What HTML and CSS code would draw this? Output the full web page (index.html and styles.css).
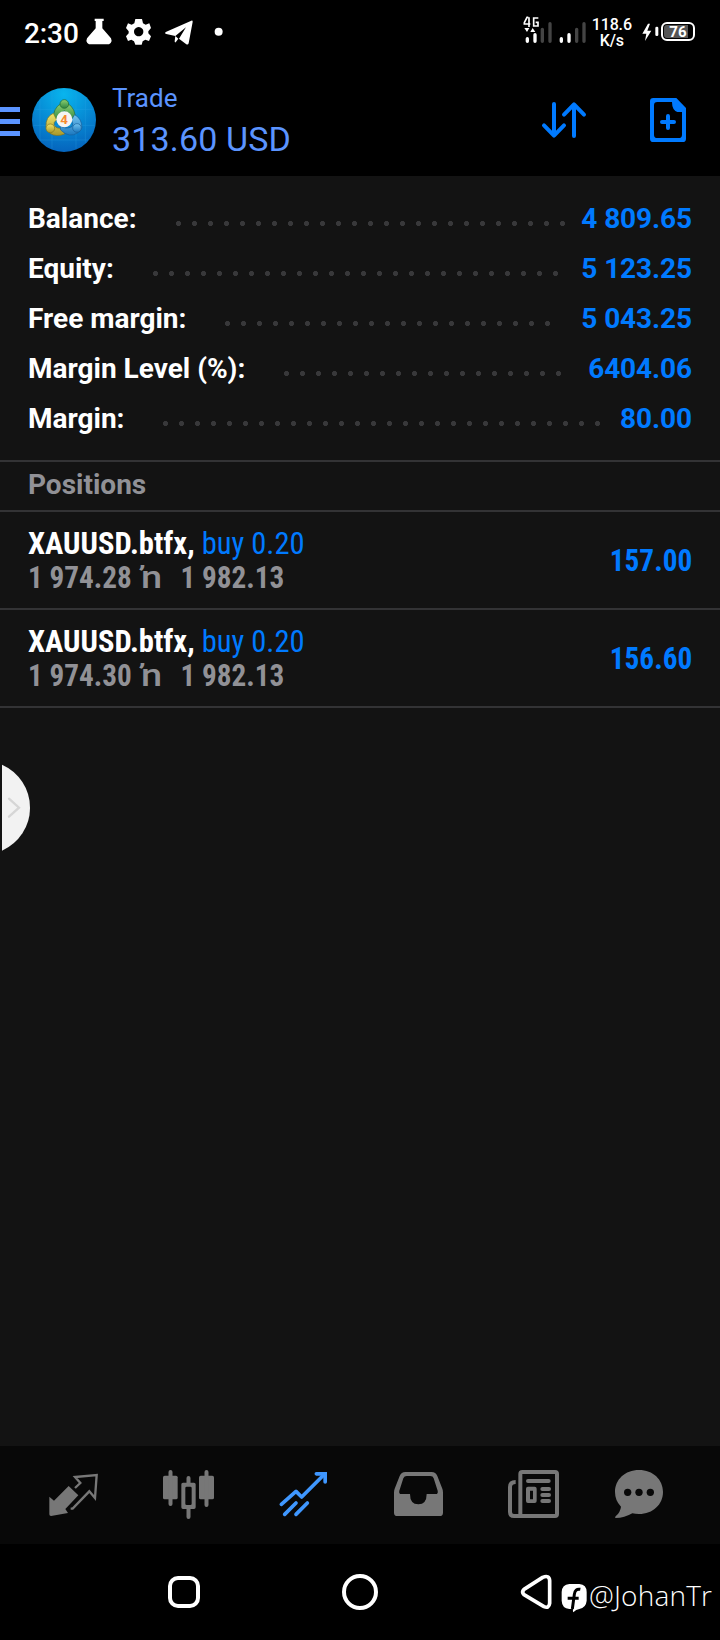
FILE: index.html
```html
<!DOCTYPE html>
<html lang="en">
<head>
    <meta charset="UTF-8">
    <meta name="viewport" content="width=device-width, initial-scale=1.0">
    <title>Trade</title>
    <link rel="stylesheet" href="styles.css">
</head>
<body>
    <div class="statusbar">
        <span class="clock">2:30</span>
        <svg class="status-left" viewBox="250 40 440 110" fill="#fff">
            <path d="M285 57h27v7h-4v22l26 30q4 8-1 14l-5 4h-60l-5-4q-5-6-1-14l26-30V64h-3z"/>
            <path fill-rule="evenodd" d="M407 58h20l3 13 8 4 11-4 5 14-8 10v6l8 9-6 14-11-4-8 5-3 10h-19l-4-10-8-5-10 4-6-14 8-9v-6l-8-10 6-14 11 4 8-4zM417 82a14 14 0 1 0 .1 0z"/>
            <path d="M575 63q5-1 4 4l-12 64q-2 6-8 2l-21-16 21-34-32 26-27-6q-8-3 0-7z"/>
            <path d="M527 109l9 8-8 11q-3 1-3-3z"/>
            <circle cx="657" cy="96" r="12"/>
        </svg>
        <svg class="signal" viewBox="70 45 195 90">
            <g fill="none" stroke="#fff" stroke-width="5">
                <path d="M86 52h-4L74 68v4h18M88 52v29M116 54h-14v24h13V67h-7"/>
            </g>
            <path fill="#fff" d="M74 84h15l-7 12zM92 96l7-12 8 12z"/>
            <g stroke="#fff" stroke-width="10" stroke-linecap="round">
                <path d="M83 116v8M106 104v20M185 116v8M208 104v20"/>
            </g>
            <g stroke="#444" stroke-width="10" stroke-linecap="round">
                <path d="M128 88v36M151 71v53M231 88v36M253 71v53"/>
            </g>
        </svg>
        <div class="speed">118.6<br>K/s</div>
        <svg class="bolt" viewBox="428 70 50 55" fill="#fff">
            <path d="M446 72l-17 30h12l-4 22 19-31h-12l8-21z"/>
            <rect x="468" y="81" width="9" height="28" rx="4"/>
        </svg>
        <div class="battery"><span>76</span></div>
    </div>

    <div class="header">
        <div class="menu"><i></i><i></i><i></i></div>
        <svg class="logo" viewBox="0 0 192 192">
            <defs>
                <radialGradient id="sky" cx=".5" cy=".1" r=".9">
                    <stop offset="0" stop-color="#08b5ee"/>
                    <stop offset="1" stop-color="#0564bd"/>
                </radialGradient>
                <linearGradient id="green" x2="0" y2="1"><stop stop-color="#8fd071"/><stop offset="1" stop-color="#2c8540"/></linearGradient>
                <linearGradient id="yellow" x2="0" y2="1"><stop stop-color="#f1e56b"/><stop offset="1" stop-color="#a8982a"/></linearGradient>
                <linearGradient id="blue" x2="0" y2="1"><stop stop-color="#75c5f0"/><stop offset="1" stop-color="#1b78bf"/></linearGradient>
            </defs>
            <circle cx="96" cy="96" r="96" fill="url(#sky)"/>
            <path stroke="#2fa7e8" stroke-width="2" opacity=".4" d="M24 32v128M60 10v172M132 10v172M160 28v136M10 64h172M4 112h184M24 156h144"/>
            <path d="M64 96q-2-36 24-50h18q26 14 24 52l-18 2q-2-24-16-32-12 8-14 26z" fill="url(#green)" stroke="#256b38" stroke-width="2"/>
            <path d="M64 76q-24 10-22 42l12 18q18 12 44 2l-6-18q-18 4-26-8-2-10 8-16z" fill="url(#yellow)" stroke="#80741f" stroke-width="2"/>
            <path d="M128 80q22 12 22 40l-12 14q-26 18-52-8l-2-14q16 14 36 4 6-8-2-20z" fill="url(#blue)" stroke="#165f9b" stroke-width="2"/>
            <circle cx="97" cy="48" r="13" fill="url(#green)" stroke="#1d6530" stroke-width="2"/>
            <circle cx="55" cy="121" r="13" fill="url(#yellow)" stroke="#80741f" stroke-width="2"/>
            <circle cx="135" cy="120" r="13" fill="url(#blue)" stroke="#165f9b" stroke-width="2"/>
            <circle cx="97" cy="94" r="24" fill="#f4f4f2"/>
            <text class="logo-digit" x="96" y="109" text-anchor="middle">4</text>
        </svg>
        <div class="title">
            <div class="title-name">Trade</div>
            <div class="title-sum">313.60 USD</div>
        </div>
        <svg class="sort" viewBox="120 300 144 120" fill="none" stroke="#007aff" stroke-width="12" stroke-linecap="round" stroke-linejoin="round">
            <path d="M162 312v94M132 376l30 31 30-31M222 408v-94M192 344l30-31 30 31"/>
        </svg>
        <svg class="new-order" viewBox="447 291 114 138">
            <path fill="#007aff" fill-rule="evenodd" d="M460 294h69l29 30v92q0 10-10 10h-88q-10 0-10-10V304q0-10 10-10zM472 306q-10 0-10 10v88q0 10 10 10h64q10 0 10-10v-68h-14q-16-6-16-30z"/>
            <path stroke="#007aff" stroke-width="12" stroke-linecap="round" d="M504 348v36M486 366h36"/>
        </svg>
    </div>

    <div class="summary">
        <div class="row"><span class="label">Balance:</span><span class="dots" style="--n: 25"></span><span class="value">4 809.65</span></div>
        <div class="row"><span class="label">Equity:</span><span class="dots" style="--n: 26"></span><span class="value">5 123.25</span></div>
        <div class="row"><span class="label">Free margin:</span><span class="dots" style="--n: 21"></span><span class="value">5 043.25</span></div>
        <div class="row"><span class="label">Margin Level (%):</span><span class="dots" style="--n: 18"></span><span class="value">6404.06</span></div>
        <div class="row"><span class="label">Margin:</span><span class="dots" style="--n: 28"></span><span class="value">80.00</span></div>
    </div>

    <div class="section">Positions</div>

    <div class="position">
        <div class="info">
            <div class="symbol">XAUUSD.btfx, <span class="side">buy 0.20</span></div>
            <div class="prices">1 974.28 <span class="arrow">ŉ</span>&nbsp; 1 982.13</div>
        </div>
        <div class="profit">157.00</div>
    </div>
    <div class="position">
        <div class="info">
            <div class="symbol">XAUUSD.btfx, <span class="side">buy 0.20</span></div>
            <div class="prices">1 974.30 <span class="arrow">ŉ</span>&nbsp; 1 982.13</div>
        </div>
        <div class="profit">156.60</div>
    </div>

    <!-- edge panel handle, floats over the list -->
    <svg class="handle" viewBox="0 70 96 270">
        <path fill="#f2f2f2" d="M6 75a141 141 0 0 1 0 258z"/>
        <path fill="none" stroke="#d6d6d6" stroke-width="7" stroke-linecap="round" d="M27 177l30 27-30 27"/>
    </svg>

    <div class="tabs">
        <svg viewBox="132 75 180 180">
            <path fill="#777" d="M206 138l29 28-39 41 8 12-51 9q-5 0-5-5v-53l14 12z"/>
            <path fill="none" stroke="#777" stroke-width="7" d="M212 206h6l50-52 17 20 5-69-65 6 16 18-16 15"/>
        </svg>
        <svg viewBox="477 75 180 180">
            <g fill="#777">
                <rect x="489" y="107" width="44" height="71" rx="5"/>
                <rect x="597" y="107" width="45" height="71" rx="5"/>
                <path fill-rule="evenodd" d="M549 128h33q5 0 5 5v69q0 5-5 5h-33q-5 0-5-5v-69q0-5 5-5zM560 140q-4 0-4 4v47q0 4 4 4h11q4 0 4-4v-47q0-4-4-4z"/>
            </g>
            <path stroke="#777" stroke-width="12" stroke-linecap="round" d="M511.500 96v96M619.500 96v99M565.500 114v16M565.500 206v25"/>
        </svg>
        <svg viewBox="102 75 180 180" fill="none" stroke="#3f97ff" stroke-width="11" stroke-linecap="round" stroke-linejoin="round">
            <path d="M124 193l44-39 17 17 66-66M134 223l34-34M168 223l34-34"/>
            <path stroke-linejoin="miter" d="M229 101.500h26.500V126"/>
        </svg>
        <svg viewBox="447 75 180 180">
            <path fill="#777" fill-rule="evenodd" d="M496 96h79q12 0 17 12l15 38q2 5 2 12v60q0 10-10 10h-127q-10 0-10-10v-60q0-7 2-12l15-38q5-12 17-12zM500 108q-7 0-10 7l-12 37q-2 10 6 10h26q0 31 25 31t25-31h27q8 0 6-10l-12-37q-2-7-10-7z"/>
        </svg>
        <svg viewBox="72 75 180 180">
            <g fill="none" stroke="#777" stroke-width="12">
                <rect x="121" y="96" width="110" height="132" rx="6"/>
                <path d="M107 126q-17 0-17 15v75q0 12 12 12h24"/>
            </g>
            <path fill="#777" fill-rule="evenodd" d="M144 140h20q6 0 6 6v37q0 6-6 6h-20q-6 0-6-6v-37q0-6 6-6zM150 152v26h9v-26z"/>
            <path stroke="#777" stroke-width="12" stroke-linecap="round" d="M144 123h62M187 147h20M187 165h20M187 183h20"/>
        </svg>
        <svg class="chat" viewBox="387 75 180 180">
            <path fill="#777" d="M477 90c42 0 72 29 72 66s-30 66-72 66q-11 0-20-2-24 14-50 14-4-2 0-5 14-12 16-29-18-18-18-44c0-37 30-66 72-66z"/>
            <g fill="#080808"><circle cx="443" cy="157" r="11"/><circle cx="477" cy="157" r="11"/><circle cx="511" cy="157" r="11"/></g>
        </svg>
    </div>

    <div class="navbar">
        <div class="recent"></div>
        <div class="home"></div>
        <svg class="back" viewBox="120 72 96 108" fill="none" stroke="#fff" stroke-width="11" stroke-linejoin="round">
            <path d="M188 82q20-8 21 10v68q-2 16-17 10l-60-36q-8-8 0-16z"/>
        </svg>
        <svg class="fb" viewBox="243 99 78 90">
            <path fill="#fff" d="M268 102h30q22 2 22 24v26q-2 21-22 25-10 1-18 10-2-3-1-10h-11q-22-2-23-25v-26q1-22 23-24z"/>
            <path fill="none" stroke="#000" stroke-width="9" d="M301 118q-16-3-18 15l-6 44M263 145h33"/>
        </svg>
        <span class="handle-name">@JohanTr</span>
    </div>
</body>
</html>
```
FILE: styles.css
```css
* { margin: 0; padding: 0; box-sizing: border-box; }
:root {
    --blue: #007aff; --light-blue: #5b94ff;
    --bg: #131313; --line: #333335;
    --gray: #919196;
}
body { width: 720px; height: 1640px; display: flex; flex-direction: column; background: var(--bg); color: #fff; font-family: Roboto, "Liberation Sans", sans-serif; overflow: hidden; position: relative; }
svg { display: block; flex: none; }

.statusbar { height: 64px; display: flex; align-items: flex-start; background: #000; flex: none; }
.clock { width: 59px; margin-left: 24px; padding-top: 16px; font-size: 28px; line-height: 36px; font-weight: 500; letter-spacing: -0.1px; white-space: nowrap; }
.status-left { width: 146.67px; height: 36.67px; margin-top: 13.33px; }
.signal { width: 65px; height: 30px; margin: 15px 0 0 293.67px; }
.speed { width: 44px; margin: 17px 0 0 1.500px; font-size: 16px; line-height: 16px; font-weight: 500; text-align: center; letter-spacing: -0.1px; }
.bolt { width: 16.67px; height: 18.33px; margin: 23.33px 0 0 8.500px; }
.battery { width: 34px; height: 19px; margin: 22px 0 0 2px; border: 2px solid #fff; border-radius: 6px; padding: 1px; }
.battery span { display: block; height: 13px; border-radius: 3px; background: linear-gradient(90deg, #555 85%, #000 85%); font-size: 15px; line-height: 14px; font-weight: 700; text-align: center; }

.header { height: 112px; display: flex; align-items: flex-start; background: #000; flex: none; }
.menu { width: 20px; display: flex; flex-direction: column; gap: 7px; margin-top: 43px; }
.menu i { height: 5px; background: var(--light-blue); }
.logo { width: 64px; height: 64px; margin: 24px 0 0 12px; }
.logo-digit { font: 700 40px Roboto, sans-serif; fill: #f58a2e; }
.title { width: 430px; margin: 18px 0 0 16px; color: var(--light-blue); white-space: nowrap; }
.title-name { font-size: 26px; line-height: 32px; }
.title-sum { font-size: 34px; line-height: 50px; letter-spacing: 0.15px; }
.sort { width: 48px; height: 40px; margin: 36px 0 0 -2px; }
.new-order { width: 38px; height: 46px; margin: 33px 0 0 61px; }

.summary { height: 284px; padding: 17px 28px 0; flex: none; }
.row { display: flex; height: 50px; align-items: center; font-size: 28px; font-weight: 700; white-space: nowrap; }
.dots { width: calc(var(--n) * 16px); height: 5px; margin: 11px 0 0 39px; background: radial-gradient(circle at 2.500px 2.500px, #38383a 2.200px, transparent 2.900px) 0 0 / 16px 5px repeat-x; }
.value { margin-left: auto; color: var(--blue); letter-spacing: -0.1px; }

.section { height: 52px; padding: 0 28px; border-top: 2px solid var(--line); border-bottom: 2px solid var(--line); color: var(--gray); font-size: 28px; line-height: 46px; font-weight: 700; flex: none; }

.position { height: 98px; display: flex; justify-content: space-between; align-items: center; padding: 0 28px 1px; border-bottom: 2px solid var(--line); font-size: 32px; line-height: 34px; font-weight: 700; font-stretch: 75%; white-space: nowrap; flex: none; }
.symbol { transform: scaleX(0.955); transform-origin: left; }
.side { color: var(--blue); font-weight: 400; }
.prices { color: var(--gray); transform: scaleX(0.912); transform-origin: left; }
.arrow { display: inline-block; margin: 0 11px 0 2.500px; font-weight: 500; font-stretch: 100%; transform: scaleX(1.3); transform-origin: left; }
.profit { color: var(--blue); transform: scaleX(0.913); transform-origin: right; }

.handle { position: absolute; left: 0; top: 763.33px; width: 32px; height: 90px; }

.tabs { height: 98px; margin-top: auto; padding: 19px 0 0 44px; display: flex; gap: 55px; background: #080808; flex: none; }
.tabs svg { width: 60px; height: 60px; }
.tabs .chat { margin-left: -10px; }

.navbar { height: 96px; display: flex; align-items: flex-start; background: #000; flex: none; }
.recent { width: 32px; height: 32px; margin: 32px 0 0 168px; border: 4px solid #fff; border-radius: 10px; }
.home { width: 36px; height: 36px; margin: 30px 0 0 142px; border: 4px solid #fff; border-radius: 50%; }
.back { width: 32px; height: 36px; margin: 30px 0 0 142px; }
.fb { width: 26px; height: 30px; margin: 39px 0 0 9px; }
.handle-name { margin: 32px 0 0 2px; font-family: "Open Sans", "Noto Sans", sans-serif; font-size: 28px; line-height: 38px; font-weight: 300; letter-spacing: 0.2px; white-space: nowrap; }
```
